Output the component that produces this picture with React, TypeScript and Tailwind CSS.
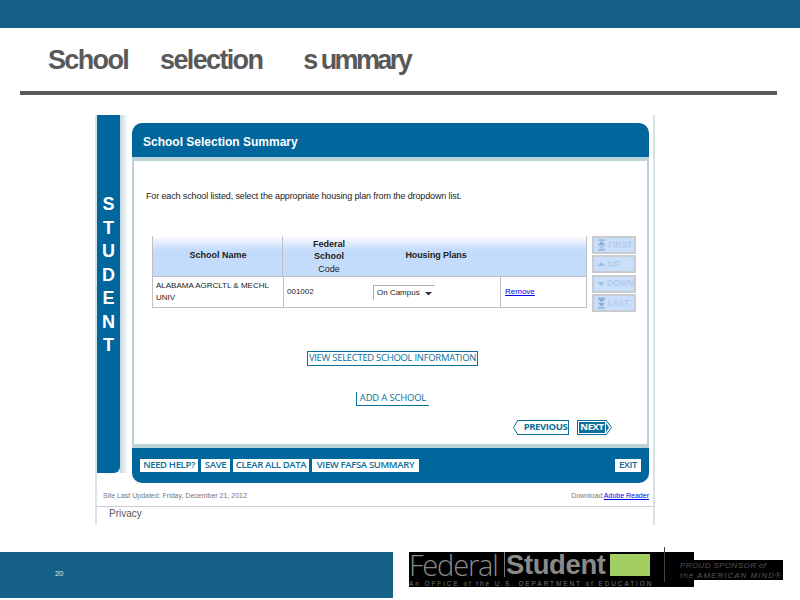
import React from 'react';

const FirstIcon = () => (
  <svg width="9" height="12" viewBox="0 0 9 12" fill="#86a8cf">
    <path d="M1 0.5h7v1.2H1z" />
    <path d="M4.5 2 L8 6 H1 Z" />
    <path d="M1 6.5 H8 L4.5 10 Z" fill="#a9c3e2" />
    <path d="M1 10.3h7v1.2H1z" />
  </svg>
);

const UpIcon = () => (
  <svg width="9" height="12" viewBox="0 0 9 12" fill="#a0bcdd">
    <path d="M4.5 4 L8.5 8 H0.5 Z" />
  </svg>
);

const DownIcon = () => (
  <svg width="9" height="12" viewBox="0 0 9 12" fill="#a0bcdd">
    <path d="M0.5 4 H8.5 L4.5 8 Z" />
  </svg>
);

const LastIcon = () => (
  <svg width="9" height="12" viewBox="0 0 9 12" fill="#86a8cf">
    <path d="M1 0.5h7v1.2H1z" />
    <path d="M1 2 H8 L4.5 5.5 Z" />
    <path d="M1 6 H8 L4.5 9.5 Z" />
    <path d="M1 10.3h7v1.2H1z" />
  </svg>
);

const sideButtons = [
  { label: 'FIRST', icon: <FirstIcon /> },
  { label: 'UP', icon: <UpIcon /> },
  { label: 'DOWN', icon: <DownIcon /> },
  { label: 'LAST', icon: <LastIcon /> },
];

const footerButtons = [
  { label: 'NEED HELP?', width: 'w-[58px]' },
  { label: 'SAVE', width: 'w-[29px]' },
  { label: 'CLEAR ALL DATA', width: 'w-[76px]' },
  { label: 'VIEW FAFSA SUMMARY', width: 'w-[107px]' },
];

const App: React.FC = () => {
  return (
    <div className="w-[800px] h-[600px] bg-white overflow-hidden flex flex-col font-['Liberation_Sans',sans-serif]">
      <div className="h-[28px] bg-[#156087]" />

      {/* Slide title */}
      <div className="h-[63px] pl-[48px] pt-[14px] flex text-[#595959] text-[27px] leading-[36px] font-bold tracking-[-1.65px]">
        <span>School</span>
        <span className="ml-[32px]">selection</span>
        <span className="ml-[41px] tracking-[-2.6px]">s ummary</span>
      </div>
      <div className="ml-[20px] w-[757px] h-[4px] bg-[#595959]" />

      {/* Screenshot of the web form */}
      <div className="ml-[95px] mt-[20px] w-[560px] h-[410px] border-x-2 border-[#d6e4e8] flex flex-col">
        <div className="flex h-[368px]">
          <div className="w-[23px] h-[358px] bg-[#00669b] rounded-br-[6px] pt-[78px] flex flex-col items-center text-white text-[18px] leading-[23.5px] font-bold">
            {'STUDENT'.split('').map((letter, i) => (
              <span key={i}>{letter}</span>
            ))}
          </div>
          <div className="w-[8px] h-[358px] bg-gradient-to-r from-[#c4d8de] to-white" />

          <div className="ml-[4px] w-[517px] pt-[8px] flex flex-col">
            <div className="h-[34px] bg-[#00669b] rounded-t-[10px] pl-[11px] pt-[3px] flex items-center text-white text-[12px] font-bold">
              School Selection Summary
            </div>

            <div className="h-[291px] border-x-[2px] border-y-[4px] border-[#b9d3d8] bg-white flex flex-col">
              <p className="mt-[29px] ml-[12px] text-[9px] leading-[12px] text-[#222] tracking-[-0.13px]">
                For each school listed, select the appropriate housing plan from the dropdown list.
              </p>

              <div className="mt-[34px] ml-[18px] flex">
                <div className="w-[435px] h-[72px] border-r border-b border-l border-[#c0c0c0] flex flex-col text-[9px] text-[#222]">
                  <div className="h-[41px] grid grid-cols-[130px_90px_214px] bg-gradient-to-b from-white to-[#c4dcfb] to-35% border-b border-[#c0c0c0] font-bold items-center text-center">
                    <span>School Name</span>
                    <span className="h-full border-l border-[#c0c0c0] pl-[2px] -ml-px flex flex-col items-center justify-center leading-[12.5px] pt-[1px]">
                      <span>Federal</span>
                      <span>School</span>
                      <span className="font-normal">Code</span>
                    </span>
                    <span className="pr-[88px] tracking-[-0.1px]">Housing Plans</span>
                  </div>
                  <div className="flex-1 grid grid-cols-[130px_90px_127px_87px] items-center text-[8px]">
                    <span className="pl-[3px] leading-[12px]">ALABAMA AGRCLTL &amp; MECHL UNIV</span>
                    <span className="h-full border-l border-[#c0c0c0] pl-[3px] flex items-center">001002</span>
                    <div className="flex items-center">
                      <div className="w-[62px] h-[15px] border-t border-l border-[#b0b0b0] pl-[3px] flex items-center justify-between pr-[3px]">
                        <span>On Campus</span>
                        <svg width="7" height="6" viewBox="0 0 7 6" fill="#333">
                          <path d="M0 2 H7 L3.5 5.5 Z" />
                        </svg>
                      </div>
                    </div>
                    <span className="h-full border-l border-[#c0c0c0] pl-[4px] flex items-center text-[#0000ee] underline">
                      Remove
                    </span>
                  </div>
                </div>

                <div className="ml-[5px] w-[44px] flex flex-col gap-[1.33px]">
                  {sideButtons.map((b) => (
                    <div
                      key={b.label}
                      className="h-[18px] border-2 border-[#c8ccd0] bg-[#c8def9] flex items-center pl-[3px] gap-[2px] text-[8.5px] text-[#a9c6ea]"
                    >
                      {b.icon}
                      <span>{b.label}</span>
                    </div>
                  ))}
                </div>
              </div>

              <div className="mt-[39px] ml-[173px] w-[171px] h-[15px] border border-[#0c6f9a] flex items-center justify-center whitespace-nowrap text-[#0c6f9a] text-[9.5px] font-['Open_Sans',sans-serif] tracking-[-0.3px]">
                VIEW SELECTED SCHOOL INFORMATION
              </div>
              <div className="mt-[26px] ml-[222px] w-[73px] h-[14px] border-l border-b border-[#0c6f9a] flex items-center justify-center text-[#0c6f9a] text-[9.5px] font-['Open_Sans',sans-serif] tracking-[-0.2px]">
                ADD A SCHOOL
              </div>

              <div className="mt-[14px] ml-[383px] flex items-center gap-[8px] font-['Open_Sans',sans-serif] text-[9.5px] font-bold tracking-[-0.4px]">
                <div className="relative w-[52px] h-[15px] pl-[5px] border border-[#0c6f9a] text-[#0c6f9a] flex items-center justify-center">
                  PREVIOUS
                  <svg className="absolute -left-[5px] -top-px" width="5" height="15" viewBox="0 0 5 15">
                    <path d="M5 0 L0.5 7.5 L5 15" fill="#fff" stroke="#0c6f9a" strokeWidth="1" />
                  </svg>
                </div>
                <div className="relative w-[30px] h-[15px] border border-[#0c6f9a] p-px">
                  <div className="h-full bg-[#0c6f9a] text-white flex items-center justify-center">NEXT</div>
                  <svg className="absolute -right-[6px] -top-px" width="6" height="15" viewBox="0 0 6 15">
                    <path d="M0 0 L5.5 7.5 L0 15" fill="#fff" stroke="#0c6f9a" strokeWidth="1" />
                    <path d="M0 3 L3 7.5 L0 12 Z" fill="#0c6f9a" />
                  </svg>
                </div>
              </div>
            </div>

            <div className="h-[35px] bg-[#00669b] rounded-b-[10px] pl-[8px] pr-[8px] flex items-center gap-[3px] font-['Open_Sans',sans-serif] text-[9.5px] font-semibold tracking-[-0.35px] text-[#0c6f9a]">
              {footerButtons.map((b) => (
                <span key={b.label} className={`${b.width} h-[13px] bg-white flex items-center justify-center whitespace-nowrap`}>
                  {b.label}
                </span>
              ))}
              <span className="ml-auto w-[26px] h-[13px] bg-white flex items-center justify-center">EXIT</span>
            </div>
          </div>
        </div>

        <div className="h-[24px] pl-[6px] pr-[4px] pt-[8px] flex justify-between text-[7px] leading-[10px] text-[#777] border-b border-[#cccccc]">
          <span>Site Last Updated: Friday, December 21, 2012</span>
          <span>
            Download <span className="text-[#0000ee] underline">Adobe Reader</span>
          </span>
        </div>
        <div className="pl-[12px] pt-[1px] text-[10px] leading-[12px] text-[#555]">Privacy</div>
      </div>

      {/* Slide footer */}
      <div className="mt-[27px] flex">
        <div className="w-[393px] h-[46px] bg-[#156087] pl-[55px] pt-[16px] text-[8px] leading-[12px] text-[#cfe6ee] tracking-[-0.5px]">
          20
        </div>
        <div className="ml-[16px] w-[285px] h-[35px] bg-black flex flex-col">
          <div className="h-[25px] flex items-center">
            <span className="text-[#8a8a8a] text-[29px] leading-[25px] font-light font-['Open_Sans',sans-serif] w-[95px] tracking-[-1.2px] whitespace-nowrap">
              Federal
            </span>
            <span className="w-px h-[25px] bg-[#777]" />
            <span className="ml-[1px] text-[#8a8a8a] text-[27.5px] leading-[25px] font-bold w-[104px] tracking-[-0.4px] whitespace-nowrap">
              Student
            </span>
            <span className="w-[40px] h-[22px] bg-[#a3cf62]" />
            <span className="ml-[14px] w-px h-[35px] bg-[#444]" />
          </div>
          <div className="mt-[3px] text-[6.5px] leading-[7px] tracking-[1.9px] text-[#777] whitespace-nowrap">
            An OFFICE of the U.S. DEPARTMENT of EDUCATION
          </div>
        </div>
        <div className="mt-[8px] w-[89px] h-[20px] pt-[1px] bg-black text-[#555] text-[8px] leading-[10px] whitespace-nowrap">
          <div className="italic -ml-[14px] tracking-[0.4px]">PROUD SPONSOR of</div>
          <div className="italic -ml-[14px] tracking-[1px]">the AMERICAN MIND®</div>
        </div>
      </div>
    </div>
  );
};

export default App;
